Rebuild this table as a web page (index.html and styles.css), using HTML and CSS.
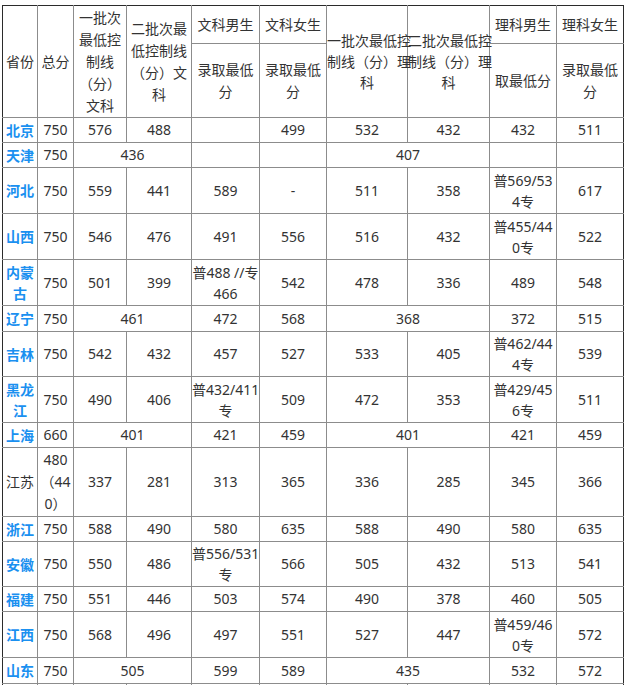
FILE: index.html
```html
<!DOCTYPE html>
<html lang="zh-CN">
<head>
<meta charset="utf-8">
<title>各省录取分数线</title>
<link rel="stylesheet" href="styles.css">
</head>
<body>
<table class="score">
  <colgroup>
    <col class="c1"><col class="c2"><col class="c3"><col class="c4"><col class="c5">
    <col class="c6"><col class="c7"><col class="c8"><col class="c9"><col class="c10">
  </colgroup>
  <thead>
    <tr class="h1">
      <td rowspan="2" class="first">省份</td>
      <td rowspan="2">总分</td>
      <td rowspan="2">一批次<br>最低控<br>制线<br>（分）<br>文科</td>
      <td rowspan="2">二批次最<br>低控制线<br>（分）文<br>科</td>
      <td>文科男生</td>
      <td>文科女生</td>
      <td rowspan="2" class="nw">一批次最低控<br>制线（分）理<br>科</td>
      <td rowspan="2" class="nw">二批次最低控<br>制线（分）理<br>科</td>
      <td>理科男生</td>
      <td>理科女生</td>
    </tr>
    <tr class="h2">
      <td>录取最低<br>分</td>
      <td>录取最低<br>分</td>
      <td>取最低分</td>
      <td>录取最低<br>分</td>
    </tr>
  </thead>
  <tbody>
    <tr class="r25">
      <td class="first pv">北京</td><td>750</td><td>576</td><td>488</td><td></td><td>499</td><td>532</td><td>432</td><td>432</td><td>511</td>
    </tr>
    <tr class="r25">
      <td class="first pv">天津</td><td>750</td><td colspan="2">436</td><td></td><td></td><td colspan="2">407</td><td></td><td></td>
    </tr>
    <tr class="r46">
      <td class="first pv">河北</td><td>750</td><td>559</td><td>441</td><td>589</td><td>-</td><td>511</td><td>358</td><td class="nw">普569/53<br>4专</td><td>617</td>
    </tr>
    <tr class="r46">
      <td class="first pv">山西</td><td>750</td><td>546</td><td>476</td><td>491</td><td>556</td><td>516</td><td>432</td><td class="nw">普455/44<br>0专</td><td>522</td>
    </tr>
    <tr class="r46">
      <td class="first pv">内蒙<br>古</td><td>750</td><td>501</td><td>399</td><td class="nw">普488 //专<br>466</td><td>542</td><td>478</td><td>336</td><td>489</td><td>548</td>
    </tr>
    <tr class="r26">
      <td class="first pv">辽宁</td><td>750</td><td colspan="2">461</td><td>472</td><td>568</td><td colspan="2">368</td><td>372</td><td>515</td>
    </tr>
    <tr class="r45">
      <td class="first pv">吉林</td><td>750</td><td>542</td><td>432</td><td>457</td><td>527</td><td>533</td><td>405</td><td class="nw">普462/44<br>4专</td><td>539</td>
    </tr>
    <tr class="r46">
      <td class="first pv">黑龙<br>江</td><td>750</td><td>490</td><td>406</td><td class="nw">普432/411<br>专</td><td>509</td><td>472</td><td>353</td><td class="nw">普429/45<br>6专</td><td>511</td>
    </tr>
    <tr class="r25">
      <td class="first pv">上海</td><td>660</td><td colspan="2">401</td><td>421</td><td>459</td><td colspan="2">401</td><td>421</td><td>459</td>
    </tr>
    <tr class="r69">
      <td class="first">江苏</td><td class="js">480<br>（44<br>0）</td><td>337</td><td>281</td><td>313</td><td>365</td><td>336</td><td>285</td><td>345</td><td>366</td>
    </tr>
    <tr class="r25">
      <td class="first pv">浙江</td><td>750</td><td>588</td><td>490</td><td>580</td><td>635</td><td>588</td><td>490</td><td>580</td><td>635</td>
    </tr>
    <tr class="r45">
      <td class="first pv">安徽</td><td>750</td><td>550</td><td>486</td><td class="nw">普556/531<br>专</td><td>566</td><td>505</td><td>432</td><td>513</td><td>541</td>
    </tr>
    <tr class="r25">
      <td class="first pv">福建</td><td>750</td><td>551</td><td>446</td><td>503</td><td>574</td><td>490</td><td>378</td><td>460</td><td>505</td>
    </tr>
    <tr class="r46">
      <td class="first pv">江西</td><td>750</td><td>568</td><td>496</td><td>497</td><td>551</td><td>527</td><td>447</td><td class="nw">普459/46<br>0专</td><td>572</td>
    </tr>
    <tr class="r26">
      <td class="first pv">山东</td><td>750</td><td colspan="2">505</td><td>599</td><td>589</td><td colspan="2">435</td><td>532</td><td>572</td>
    </tr>
    <tr class="r25">
      <td class="first"></td><td></td><td></td><td></td><td></td><td></td><td></td><td></td><td></td><td></td>
    </tr>
  </tbody>
</table>
</body>
</html>
```
FILE: styles.css
```css
html, body {
  overflow: hidden;
}
body {
  margin: 0;
  padding: 5px 0 0 2px;
  background: #ffffff;
  color: #333333;
  font-family: "Noto Sans", "Noto Sans CJK SC", sans-serif;
  font-size: 14px;
}
.score {
  border-collapse: collapse;
  table-layout: fixed;
  width: 622px;
}
.c1 { width: 35px; }
.c2 { width: 36px; }
.c3 { width: 53px; }
.c4 { width: 65px; }
.c5 { width: 68px; }
.c6 { width: 67px; }
.c7 { width: 81px; }
.c8 { width: 82px; }
.c9 { width: 67px; }
.c10 { width: 67px; }
.score td {
  border: 1px solid #8c8c8c;
  padding: 0;
  text-align: center;
  vertical-align: middle;
  line-height: 20px;
  word-break: break-all;
}
.score thead td {
  line-height: 22px;
}
.score td.nw {
  white-space: nowrap;
  line-height: 21px;
}
.score td.js {
  line-height: 22px;
}
.score thead tr.h1 td {
  border-top-color: #2b2b2b;
}
.score td.first {
  border-left-color: #2b2b2b;
}
.score tr td:last-child {
  border-right-color: #2b2b2b;
}
.score td.pv {
  color: #1a90f0;
  font-weight: bold;
  line-height: 21px;
}
.h1 { height: 38px; }
.h2 { height: 74px; }
.r25 { height: 25px; }
.r26 { height: 26px; }
.r45 { height: 45px; }
.r46 { height: 46px; }
.r69 { height: 69px; }
```
